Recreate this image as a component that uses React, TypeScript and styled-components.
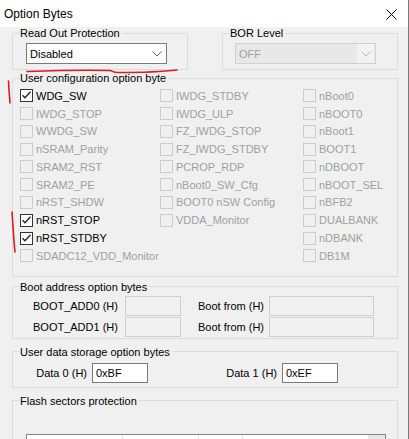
import React from 'react';
import styled, { createGlobalStyle } from 'styled-components';

const Global = createGlobalStyle`
  html, body { margin: 0; padding: 0; background: #f0f0f0; }
  body { font-family: "Liberation Sans", Arial, sans-serif; font-size: 11px; color: #000; }
  * { box-sizing: border-box; }
`;

const Window = styled.div`
  position: relative;
  width: 409px;
  height: 439px;
  overflow: hidden;
  background: #f0f0f0;
  border-right: 1px solid #7a7a7a;
  display: flex;
  flex-direction: column;
`;

const TitleBar = styled.div`
  height: 27px;
  flex: none;
  background: #ffffff;
  display: flex;
  align-items: center;
  padding-left: 4px;
  font-size: 12px;
`;

const CloseIcon = styled.svg`
  margin-left: auto;
  margin-right: 11px;
  margin-top: 1px;
`;

const Body = styled.div`
  display: flex;
  flex-direction: column;
  padding: 0 10px 0 12px;
`;

const TopRow = styled.div`
  display: flex;
  gap: 34px;
`;

const Group = styled.fieldset<{ $w?: number; $mt?: number }>`
  margin: ${(p) => p.$mt ?? 0}px 0 0 0;
  padding: 0;
  border: 1px solid #dcdcdc;
  min-width: 0;
  width: ${(p) => (p.$w ? `${p.$w}px` : 'auto')};
`;

const Legend = styled.legend`
  margin-left: 6px;
  padding: 0 2px 0 1px;
  font-size: 11px;
  line-height: 12px;
  color: #000;
`;

const GroupInner = styled.div<{ $pad: string }>`
  padding: ${(p) => p.$pad};
`;

const Combo = styled.div<{ $disabled?: boolean }>`
  width: 141px;
  height: 21px;
  display: flex;
  align-items: center;
  border: 1px solid ${(p) => (p.$disabled ? '#d0d0d0' : '#7a7a7a')};
  background: ${(p) => (p.$disabled ? '#e8e8e8' : '#ffffff')};
  color: ${(p) => (p.$disabled ? '#a0a0a0' : '#000')};
  padding-left: 3px;
`;

const ComboText = styled.span`
  flex: 1;
`;

const ComboArrow = styled.div<{ $disabled?: boolean }>`
  width: 17px;
  height: 100%;
  display: flex;
  align-items: center;
  justify-content: center;
  background: ${(p) => (p.$disabled ? '#f2f2f2' : 'transparent')};
  margin-right: 1px;
`;

const CheckGrid = styled.div`
  display: grid;
  grid-template-columns: 140px 143px 1fr;
`;

const CheckColumn = styled.div`
  display: flex;
  flex-direction: column;
`;

const CheckRow = styled.div<{ $on?: boolean }>`
  height: 17.78px;
  display: flex;
  align-items: center;
  gap: 3px;
  color: ${(p) => (p.$on ? '#000' : '#a0a0a0')};
  white-space: nowrap;
`;

const Box = styled.div<{ $on?: boolean }>`
  width: 13px;
  height: 13px;
  flex: none;
  border: 1px solid ${(p) => (p.$on ? '#333333' : '#cccccc')};
  background: ${(p) => (p.$on ? '#ffffff' : '#f0f0f0')};
  display: flex;
  align-items: center;
  justify-content: center;
`;

const FieldGrid = styled.div<{ $cols: string; $gap: number }>`
  display: grid;
  grid-template-columns: ${(p) => p.$cols};
  row-gap: ${(p) => p.$gap}px;
  align-items: center;
`;

const FieldLabel = styled.span<{ $right?: boolean; $pl?: number }>`
  text-align: ${(p) => (p.$right ? 'right' : 'left')};
  padding-left: ${(p) => p.$pl ?? 0}px;
  padding-right: ${(p) => (p.$right ? 5 : 0)}px;
  white-space: nowrap;
`;

const TextBox = styled.div<{ $disabled?: boolean }>`
  height: 20px;
  border: 1px solid ${(p) => (p.$disabled ? '#d0d0d0' : '#7a7a7a')};
  background: ${(p) => (p.$disabled ? '#f0f0f0' : '#ffffff')};
  display: flex;
  align-items: center;
  padding-left: 3px;
`;

const Table = styled.div`
  width: 360px;
  height: 20px;
  display: grid;
  grid-template-columns: 96px 76px 44px 126px 1fr;
  border: 1px solid #828282;
  background: #ffffff;
`;

const TableCell = styled.div<{ $grey?: boolean }>`
  border-right: 1px solid #e5e5e5;
  background: ${(p) => (p.$grey ? '#e6e6e6' : '#ffffff')};
`;

const Annotations = styled.svg`
  position: absolute;
  left: 0;
  top: 0;
  pointer-events: none;
`;

const Chevron = ({ color }: { color: string }) => (
  <svg width="10" height="6" viewBox="0 0 10 6">
    <path d="M0.5 0.5 L5 5 L9.5 0.5" fill="none" stroke={color} strokeWidth="1" />
  </svg>
);

const Check = () => (
  <svg width="11" height="11" viewBox="0 0 11 11">
    <path d="M1.5 5.2 L4 7.8 L9.5 1.8" fill="none" stroke="#222" strokeWidth="1.3" />
  </svg>
);

type Item = { label: string; on?: boolean };

const col1: Item[] = [
  { label: 'WDG_SW', on: true },
  { label: 'IWDG_STOP' },
  { label: 'WWDG_SW' },
  { label: 'nSRAM_Parity' },
  { label: 'SRAM2_RST' },
  { label: 'SRAM2_PE' },
  { label: 'nRST_SHDW' },
  { label: 'nRST_STOP', on: true },
  { label: 'nRST_STDBY', on: true },
  { label: 'SDADC12_VDD_Monitor' },
];
const col2: Item[] = [
  { label: 'IWDG_STDBY' },
  { label: 'IWDG_ULP' },
  { label: 'FZ_IWDG_STOP' },
  { label: 'FZ_IWDG_STDBY' },
  { label: 'PCROP_RDP' },
  { label: 'nBoot0_SW_Cfg' },
  { label: 'BOOT0 nSW Config' },
  { label: 'VDDA_Monitor' },
];
const col3: Item[] = [
  { label: 'nBoot0' },
  { label: 'nBOOT0' },
  { label: 'nBoot1' },
  { label: 'BOOT1' },
  { label: 'nDBOOT' },
  { label: 'nBOOT_SEL' },
  { label: 'nBFB2' },
  { label: 'DUALBANK' },
  { label: 'nDBANK' },
  { label: 'DB1M' },
];

const CheckList = ({ items }: { items: Item[] }) => (
  <CheckColumn>
    {items.map((it) => (
      <CheckRow key={it.label} $on={it.on}>
        <Box $on={it.on}>{it.on && <Check />}</Box>
        {it.label}
      </CheckRow>
    ))}
  </CheckColumn>
);

export default function App() {
  return (
    <>
      <Global />
      <Window>
        <TitleBar>
          Option Bytes
          <CloseIcon width="11" height="11" viewBox="0 0 11 11">
            <path d="M0.5 0.5 L10.5 10.5 M10.5 0.5 L0.5 10.5" stroke="#000" strokeWidth="1" />
          </CloseIcon>
        </TitleBar>
        <Body>
          <TopRow>
            <Group $w={176}>
              <Legend>Read Out Protection</Legend>
              <GroupInner $pad="4px 0 5px 13px">
                <Combo>
                  <ComboText>Disabled</ComboText>
                  <ComboArrow>
                    <Chevron color="#606060" />
                  </ComboArrow>
                </Combo>
              </GroupInner>
            </Group>
            <Group $w={176}>
              <Legend>BOR Level</Legend>
              <GroupInner $pad="4px 0 5px 12px">
                <Combo $disabled>
                  <ComboText>OFF</ComboText>
                  <ComboArrow $disabled>
                    <Chevron color="#b8b8b8" />
                  </ComboArrow>
                </Combo>
              </GroupInner>
            </Group>
          </TopRow>

          <Group $mt={2}>
            <Legend>User configuration option byte</Legend>
            <GroupInner $pad="3px 0 11px 7px">
              <CheckGrid>
                <CheckList items={col1} />
                <CheckList items={col2} />
                <CheckList items={col3} />
              </CheckGrid>
            </GroupInner>
          </Group>

          <Group $mt={4}>
            <Legend>Boot address option bytes</Legend>
            <GroupInner $pad="3px 0 1px 20px">
              <FieldGrid $cols="92px 56px 88px 105px" $gap={1}>
                <FieldLabel>BOOT_ADD0 (H)</FieldLabel>
                <TextBox $disabled />
                <FieldLabel $pl={17}>Boot from (H)</FieldLabel>
                <TextBox $disabled />
                <FieldLabel>BOOT_ADD1 (H)</FieldLabel>
                <TextBox $disabled />
                <FieldLabel $pl={17}>Boot from (H)</FieldLabel>
                <TextBox $disabled />
              </FieldGrid>
            </GroupInner>
          </Group>

          <Group $mt={7}>
            <Legend>User data storage option bytes</Legend>
            <GroupInner $pad="5px 0 4px 0">
              <FieldGrid $cols="79px 56px 134px 56px" $gap={0}>
                <FieldLabel $right>Data 0 (H)</FieldLabel>
                <TextBox>0xBF</TextBox>
                <FieldLabel $right>Data 1 (H)</FieldLabel>
                <TextBox>0xEF</TextBox>
              </FieldGrid>
            </GroupInner>
          </Group>

          <Group $mt={7}>
            <Legend>Flash sectors protection</Legend>
            <GroupInner $pad="27px 0 0 13px">
              <Table>
                <TableCell />
                <TableCell />
                <TableCell />
                <TableCell />
                <TableCell $grey />
              </Table>
            </GroupInner>
          </Group>
        </Body>

        <Annotations width="409" height="439" viewBox="0 0 409 439">
          <path
            d="M27 71.5 C 55 70.5, 90 70, 110 70.5 C 113 71, 113 72.5, 118 72.5 C 140 72.5, 160 72, 177 70"
            fill="none"
            stroke="#e0191b"
            strokeWidth="1.6"
            strokeLinecap="round"
          />
          <path d="M8.5 81 C 8.8 88, 9.5 96, 10 103" fill="none" stroke="#e0191b" strokeWidth="1.6" strokeLinecap="round" />
          <path d="M12 212 C 13 225, 13.5 238, 15 252" fill="none" stroke="#e0191b" strokeWidth="1.6" strokeLinecap="round" />
        </Annotations>
      </Window>
    </>
  );
}
